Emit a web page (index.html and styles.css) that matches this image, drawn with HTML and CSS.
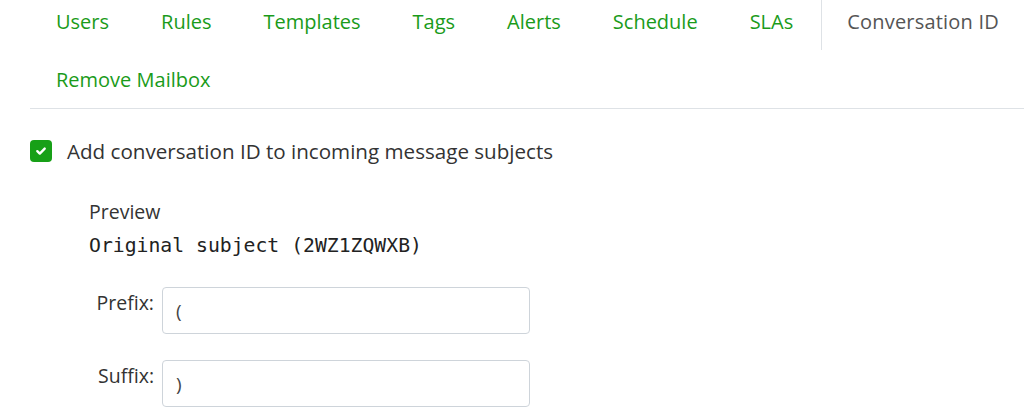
FILE: index.html
```html
<!DOCTYPE html>
<html>
<head>
<meta charset="utf-8">
<link rel="stylesheet" href="styles.css">
</head>
<body>
<div class="page">
  <ul class="tabs">
    <li class="tab"><a href="#">Users</a></li>
    <li class="tab"><a href="#">Rules</a></li>
    <li class="tab"><a href="#">Templates</a></li>
    <li class="tab"><a href="#">Tags</a></li>
    <li class="tab"><a href="#">Alerts</a></li>
    <li class="tab"><a href="#">Schedule</a></li>
    <li class="tab"><a href="#">SLAs</a></li>
    <li class="tab active"><a href="#">Conversation ID</a></li>
    <li class="tab"><a href="#">Remove Mailbox</a></li>
  </ul>
  <label class="check-row">
    <span class="checkbox">
      <svg width="12" height="12" viewBox="0 0 12 12"><path d="M2.3 6.2 L4.8 8.6 L9.7 3.6" fill="none" stroke="#fff" stroke-width="2.4" stroke-linecap="round" stroke-linejoin="round"/></svg>
    </span>
    <span class="check-label">Add conversation ID to incoming message subjects</span>
  </label>
  <div class="details">
    <div class="preview-title">Preview</div>
    <div class="preview-code">Original subject (2WZ1ZQWXB)</div>
    <div class="field">
      <span class="field-label">Prefix:</span>
      <div class="input">(</div>
    </div>
    <div class="field">
      <span class="field-label">Suffix:</span>
      <div class="input">)</div>
    </div>
  </div>
</div>
</body>
</html>
```
FILE: styles.css
```css
html, body { margin: 0; padding: 0; background: #fff; }
body {
  font-family: "Open Sans", "Noto Sans", sans-serif;
  color: #333;
  overflow: hidden;
}
.page { padding-left: 30px; }
.tabs {
  list-style: none;
  margin: -8px 0 0 0;
  padding: 0;
  display: flex;
  flex-wrap: wrap;
  border-bottom: 1px solid #dee2e6;
  width: 1000px;
}
.tab a {
  display: block;
  padding: 0 26px;
  height: 58px;
  line-height: 60px;
  font-size: 20px;
  color: #1a9b1a;
  text-decoration: none;
  white-space: nowrap;
}
.tab:nth-child(7) a { padding-right: 28px; }
.tab.active a {
  color: #555;
  border-left: 1px solid #dee2e6;
  padding-left: 25px;
  letter-spacing: 0.2px;
}
.check-row {
  display: flex;
  align-items: center;
  margin-top: 30px;
  gap: 15px;
}
.checkbox {
  width: 22px;
  height: 22px;
  border-radius: 4px;
  background: #17a017;
  display: flex;
  align-items: center;
  justify-content: center;
}
.check-label { font-size: 20.6px; line-height: 24px; color: #333; }
.details { padding-left: 59px; margin-top: 37px; }
.preview-title { font-size: 19.5px; line-height: 24px; color: #333; }
.preview-code {
  font-family: "DejaVu Sans Mono", "Liberation Mono", monospace;
  font-size: 19.75px;
  line-height: 28px;
  margin-top: 8px;
  color: #222;
}
.field {
  display: flex;
  align-items: flex-start;
  margin-top: 27px;
}
.field + .field { margin-top: 26px; }
.field-label {
  width: 73px;
  text-align: right;
  font-size: 19.5px;
  padding-top: 2px;
  padding-right: 8px;
  box-sizing: border-box;
}
.input {
  width: 368px;
  height: 47px;
  box-sizing: border-box;
  border: 1px solid #ced4da;
  border-radius: 4px;
  font-size: 19px;
  padding: 10px 13px 0;
  color: #444;
}
```
